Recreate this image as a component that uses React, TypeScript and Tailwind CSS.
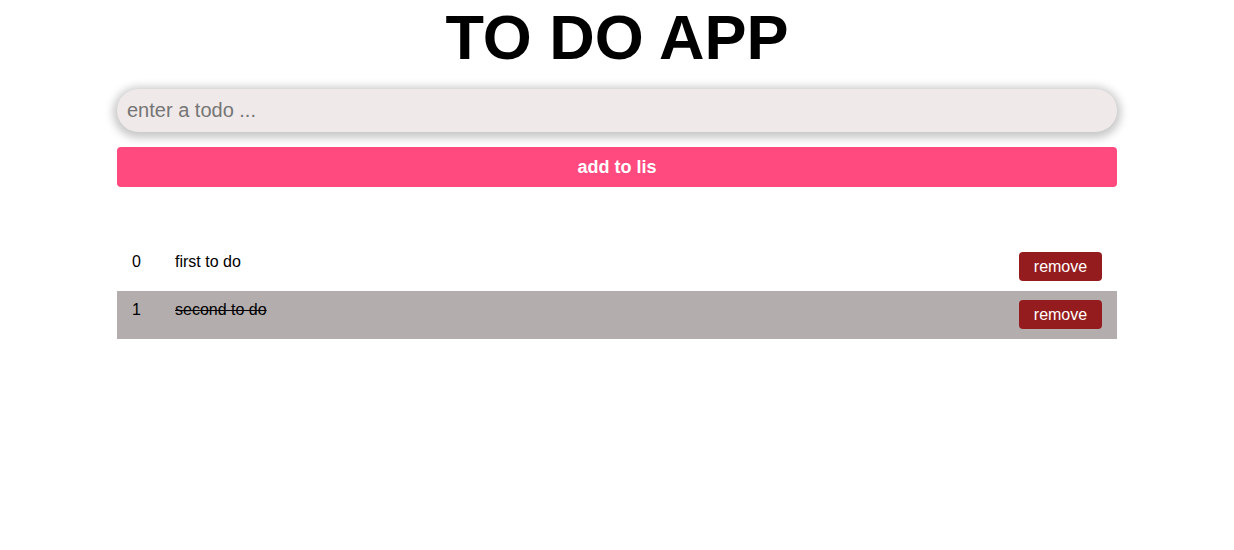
import { useState } from "react";

type Todo = { text: string; done: boolean };

export default function App() {
  const [todos, setTodos] = useState<Todo[]>([
    { text: "first to do", done: false },
    { text: "second to do", done: true },
  ]);
  const [value, setValue] = useState("");

  const add = () => {
    if (!value.trim()) return;
    setTodos([...todos, { text: value, done: false }]);
    setValue("");
  };

  return (
    <div className="min-h-[550px] bg-white font-['Liberation_Sans',Arial,sans-serif] text-black">
      <div className="mx-auto w-[1000px]">
        <h1 className="h-[74px] text-center text-[63px] font-bold leading-[74px]">
          TO DO APP
        </h1>

        <input
          value={value}
          onChange={(e) => setValue(e.target.value)}
          placeholder="enter a todo ..."
          className="mt-[15px] block h-[43px] w-full rounded-full bg-[#efe9e9] px-[10px] text-[20px] text-black shadow-[0_2px_9px_4px_rgba(0,0,0,0.22)] outline-none placeholder:text-[#757575]"
        />

        <button
          onClick={add}
          className="mt-[15px] block h-[40px] w-full rounded-[4px] bg-[#ff4a7f] text-[18px] font-bold text-white"
        >
          add to lis
        </button>

        <ul className="mt-[56px]">
          {todos.map((todo, i) => (
            <li
              key={i}
              onClick={() =>
                setTodos(
                  todos.map((t, j) => (j === i ? { ...t, done: !t.done } : t)),
                )
              }
              className={
                "flex h-[48px] items-start px-[15px] pt-[7px] text-[16px] " +
                (todo.done ? "bg-[#b3adad]" : "bg-white")
              }
            >
              <span className="w-[43px]">{i}</span>
              <span className={"flex-1 " + (todo.done ? "line-through" : "")}>
                {todo.text}
              </span>
              <button
                onClick={(e) => {
                  e.stopPropagation();
                  setTodos(todos.filter((_, j) => j !== i));
                }}
                className="mt-[2px] h-[29px] w-[83px] rounded-[4px] bg-[#941c1e] text-[16px] text-white"
              >
                remove
              </button>
            </li>
          ))}
        </ul>
      </div>
    </div>
  );
}
